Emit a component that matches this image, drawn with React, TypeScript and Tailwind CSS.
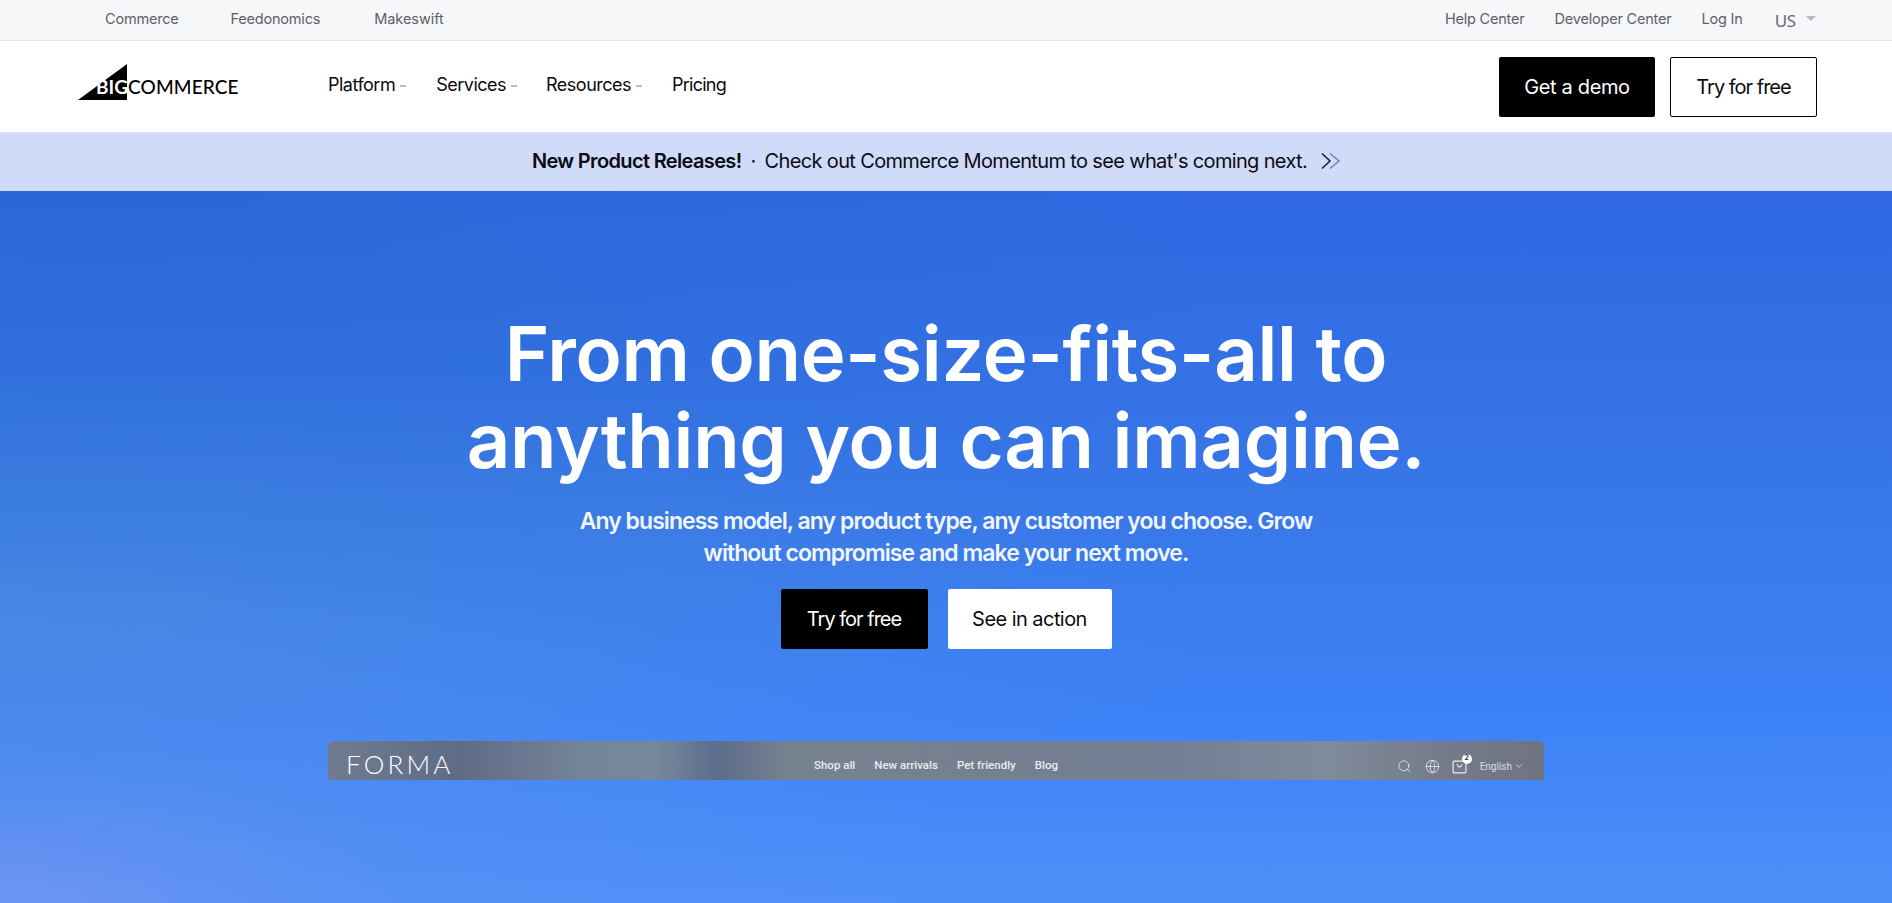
import { Search, Globe, ChevronDown } from "lucide-react";

function Caret() {
  return <span className="mt-[3px] ml-[5px] block h-[2px] w-[6px] bg-[#b9bcc2]" />;
}

function NavItem({ label, caret = true, className = "" }: { label: string; caret?: boolean; className?: string }) {
  return (
    <a className={`flex items-center text-[18px] tracking-[-0.5px] text-[#0b0b0f] ${className}`}>
      {label}
      {caret && <Caret />}
    </a>
  );
}

function Logo() {
  return (
    <div className="relative mb-[10px] flex h-[36px] w-[161px] items-end">
      <svg width="50" height="36" viewBox="0 0 50 36" className="block">
        <polygon points="0,36 49,0 49,36" fill="#000" />
      </svg>
      <span className="absolute bottom-[3px] left-[18px] font-['Lato',sans-serif] text-[19px] leading-[20px] font-bold text-white">BIG</span>
      <span className="absolute bottom-[3px] left-[50px] font-['Lato',sans-serif] text-[19px] leading-[20px] font-medium tracking-[0.15px] text-black">COMMERCE</span>
    </div>
  );
}

export default function App() {
  return (
    <div className="flex h-[903px] flex-col overflow-hidden bg-white font-['Inter',sans-serif]">
      <div className="flex h-[41px] shrink-0 items-center justify-between border-b border-[#e4e6ea] bg-[#f6f7f9] pr-[76px] pl-[105px] text-[14.5px] tracking-[-0.2px] text-[#5d6068]">
        <div className="mb-[3px] flex">
          <a className="mr-[52px]">Commerce</a>
          <a className="mr-[54px]">Feedonomics</a>
          <a className="tracking-[-0.05px]">Makeswift</a>
        </div>
        <div className="flex items-center">
          <a className="mr-[30px] mb-[3px]">Help Center</a>
          <a className="mr-[30px] mb-[3px]">Developer Center</a>
          <a className="mr-[32px] mb-[3px]">Log In</a>
          <span className="mt-[2px] font-['Noto_Sans',sans-serif] text-[17px] text-[#6a6d75]">US</span>
          <span className="mb-[3px] ml-[10px] h-0 w-0 border-x-[5px] border-t-[5px] border-x-transparent border-t-[#b4b7be]" />
        </div>
      </div>

      <div className="flex h-[92px] shrink-0 items-center border-b border-[#dfe4ee] pr-[75px] pl-[78px]">
        <Logo />
        <nav className="mb-[4px] ml-[89px] flex items-center">
          <NavItem label="Platform" className="mr-[30px]" />
          <NavItem label="Services" className="mr-[29px]" />
          <NavItem label="Resources" className="mr-[30px]" />
          <NavItem label="Pricing" caret={false} className="tracking-[-0.75px]" />
        </nav>
        <div className="ml-auto flex gap-[15px] text-[20px]">
          <a className="flex h-[60px] w-[156px] items-center justify-center rounded-[2px] bg-black tracking-[-0.35px] text-white">Get a demo</a>
          <a className="flex h-[60px] w-[147px] items-center justify-center rounded-[2px] border border-black tracking-[-1px] text-[#0b0b0f]">Try for free</a>
        </div>
      </div>

      <div className="flex h-[58px] shrink-0 items-center justify-center bg-[#cfdbf9] pr-[16px] pb-[3px] text-[20px] tracking-[-0.65px] text-[#0b0b14]">
        <b className="font-semibold">New Product Releases!</b>
        <span className="mx-[9px]">·</span>
        <span>Check out Commerce Momentum to see what's coming next.</span>
        <svg width="24" height="20" viewBox="0 0 24 20" className="ml-[13px]" fill="none" strokeWidth="1.6">
          <path d="M2 2.5 L10 10 L2 17.5" stroke="#1d2233" />
          <path d="M10 2.5 L19 10 L10 17.5" stroke="#7184c4" />
        </svg>
      </div>

      <div className="relative flex flex-1 flex-col items-center overflow-hidden bg-[linear-gradient(180deg,#2f68e2_0%,#3878e8_45%,#3e82f8_75%,#4f90f8_100%)] pt-[119px]">
        <div className="absolute inset-0 bg-[radial-gradient(ellipse_at_0%_100%,rgba(150,155,235,0.42)_0%,rgba(110,150,235,0.16)_15%,rgba(70,140,240,0)_36%),radial-gradient(ellipse_at_0%_62%,rgba(85,150,215,0.4)_0%,rgba(85,150,215,0)_45%),radial-gradient(ellipse_at_5%_5%,rgba(35,105,195,0.4)_0%,rgba(35,105,195,0)_45%)]" />
        <div className="relative flex flex-col items-center">
          <h1 className="text-center text-[76px] leading-[87px] font-semibold tracking-[-0.3px] text-white">
            From one-size-fits-all to
            <br />
            anything you can imagine.
          </h1>
          <p className="mt-[21px] text-center text-[23px] leading-[32px] font-semibold tracking-[-0.95px] text-[#f0f5ff]">
            Any business model, any product type, any customer you choose. Grow
            <br />
            without compromise and make your next move.
          </p>
          <div className="mt-[20px] flex gap-[20px] text-[20px]">
            <a className="flex h-[60px] w-[147px] items-center justify-center rounded-[2px] bg-black tracking-[-1px] text-white">Try for free</a>
            <a className="flex h-[60px] w-[164px] items-center justify-center rounded-[2px] bg-white tracking-[-0.55px] text-[#0b0b0f]">See in action</a>
          </div>
          <div className="mt-[92px] mr-[20px] flex h-[39px] w-[1216px] items-center rounded-t-[6px] bg-[linear-gradient(90deg,#707b90_0%,#5f6c86_11%,#74849a_21%,#77879c_27%,#5c6d8c_32%,#77828f_38%,#757f90_55%,#747f95_70%,#7f8b9c_82%,#757a88_92%,#6f7480_100%)] pt-[11px] text-white">
            <span className="mb-[4px] ml-[18px] w-[105px] font-['Lato',sans-serif] text-[26px] leading-[28px] font-light tracking-[3.2px]">FORMA</span>
            <div className="ml-[363px] flex gap-[19px] font-['Roboto',sans-serif] text-[11.5px] font-medium text-[#e8ecf2]">
              <span>Shop all</span>
              <span>New arrivals</span>
              <span>Pet friendly</span>
              <span>Blog</span>
            </div>
            <div className="mr-[20px] ml-auto flex items-center text-[#e8ecf2]">
              <Search size={15} strokeWidth={1.3} />
              <Globe size={15} strokeWidth={1.3} className="ml-[13px]" />
              <span className="relative ml-[12px] block">
                <svg width="15" height="15" viewBox="0 0 14 14" fill="none" stroke="currentColor" strokeWidth="1.1" className="block">
                  <rect x="1" y="2" width="12" height="11" rx="1" />
                  <path d="M4.5 5 Q7 10 9.5 5" />
                </svg>
                <span className="absolute -top-[5px] -right-[5px] flex h-[10px] w-[10px] items-center justify-center rounded-full bg-white text-[7px] font-bold text-[#333]">2</span>
              </span>
              <span className="ml-[13px] font-['Roboto',sans-serif] text-[10px] text-[#d8dce4]">English</span>
              <ChevronDown size={10} className="ml-[2px] text-[#d8dce4]" />
            </div>
          </div>
        </div>
      </div>
    </div>
  );
}
